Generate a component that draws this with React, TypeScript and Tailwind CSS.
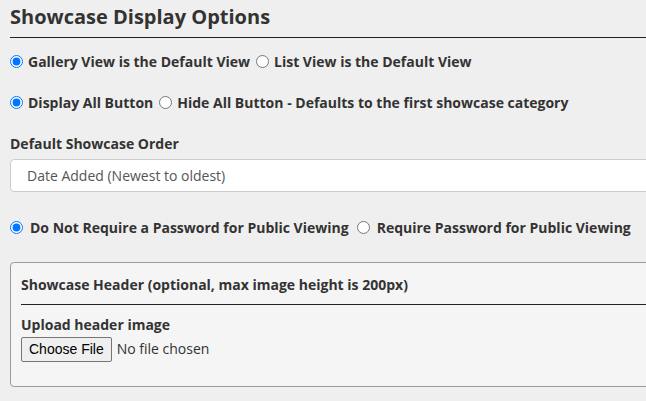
import React from 'react';

const Radio: React.FC<{ name: string; label: string; checked?: boolean; className?: string }> = ({ name, label, checked, className }) => (
  <label className={`flex items-center cursor-pointer ${className ?? ''}`}>
    <input
      type="radio"
      name={name}
      defaultChecked={checked}
      className="w-[13px] h-[13px] m-0 mr-[5px] accent-[#0075ff]"
    />
    <span>{label}</span>
  </label>
);

export default function App() {
  return (
    <div className="w-[646px] h-[401px] overflow-hidden bg-[#efefef] text-[#333] font-['Open_Sans',sans-serif]">
      <div className="pl-[10px] w-[680px]">
        <h2 className="text-[20px] font-bold leading-[28px] pt-[3px] pb-[6px] border-b border-[#222]">
          Showcase Display Options
        </h2>

        <div className="flex items-center gap-[6px] h-5 mt-[13px] text-[14px] font-bold">
          <Radio name="view" label="Gallery View is the Default View" checked />
          <Radio name="view" label="List View is the Default View" />
        </div>

        <div className="flex items-center gap-[6px] h-5 mt-[21px] text-[14px] font-bold">
          <Radio name="all" label="Display All Button" checked />
          <Radio name="all" label="Hide All Button - Defaults to the first showcase category" />
        </div>

        <div className="mt-[21px] h-5 flex items-center text-[14px] font-bold">Default Showcase Order</div>
        <select className="mt-[6px] w-full h-[33px] pl-[16px] bg-white border border-[#ccc] rounded-[4px] text-[14px] text-[#555] appearance-none outline-none">
          <option>Date Added (Newest to oldest)</option>
          <option>Date Added (Oldest to newest)</option>
        </select>

        <div className="flex items-center gap-[8px] h-5 mt-[25px] text-[14px] font-bold">
          <Radio name="pw" label="Do Not Require a Password for Public Viewing" checked className="[&>input]:mr-[7px]" />
          <Radio name="pw" label="Require Password for Public Viewing" className="[&>input]:mr-[7px]" />
        </div>

        <div className="mt-[25px] h-[125px] border border-[#9a9a9a] rounded-[4px] bg-[#f5f5f5] pl-[10px] pt-[12px]">
          <div className="text-[14px] font-bold leading-5 pb-[9px] border-b border-[#222]">
            Showcase Header (optional, max image height is 200px)
          </div>
          <div className="mt-[10px] text-[14px] font-bold leading-5">Upload header image</div>
          <input
            type="file"
            className="mt-[2px] text-[14px] text-[#333] file:font-['Liberation_Sans',Arial,sans-serif] file:text-[14px] file:text-black file:bg-[#efefef] file:border file:border-solid file:border-[#767676] file:rounded-[2px] file:px-[7px] file:py-[1px] file:mr-[5px] file:cursor-pointer"
          />
        </div>
      </div>
    </div>
  );
}
